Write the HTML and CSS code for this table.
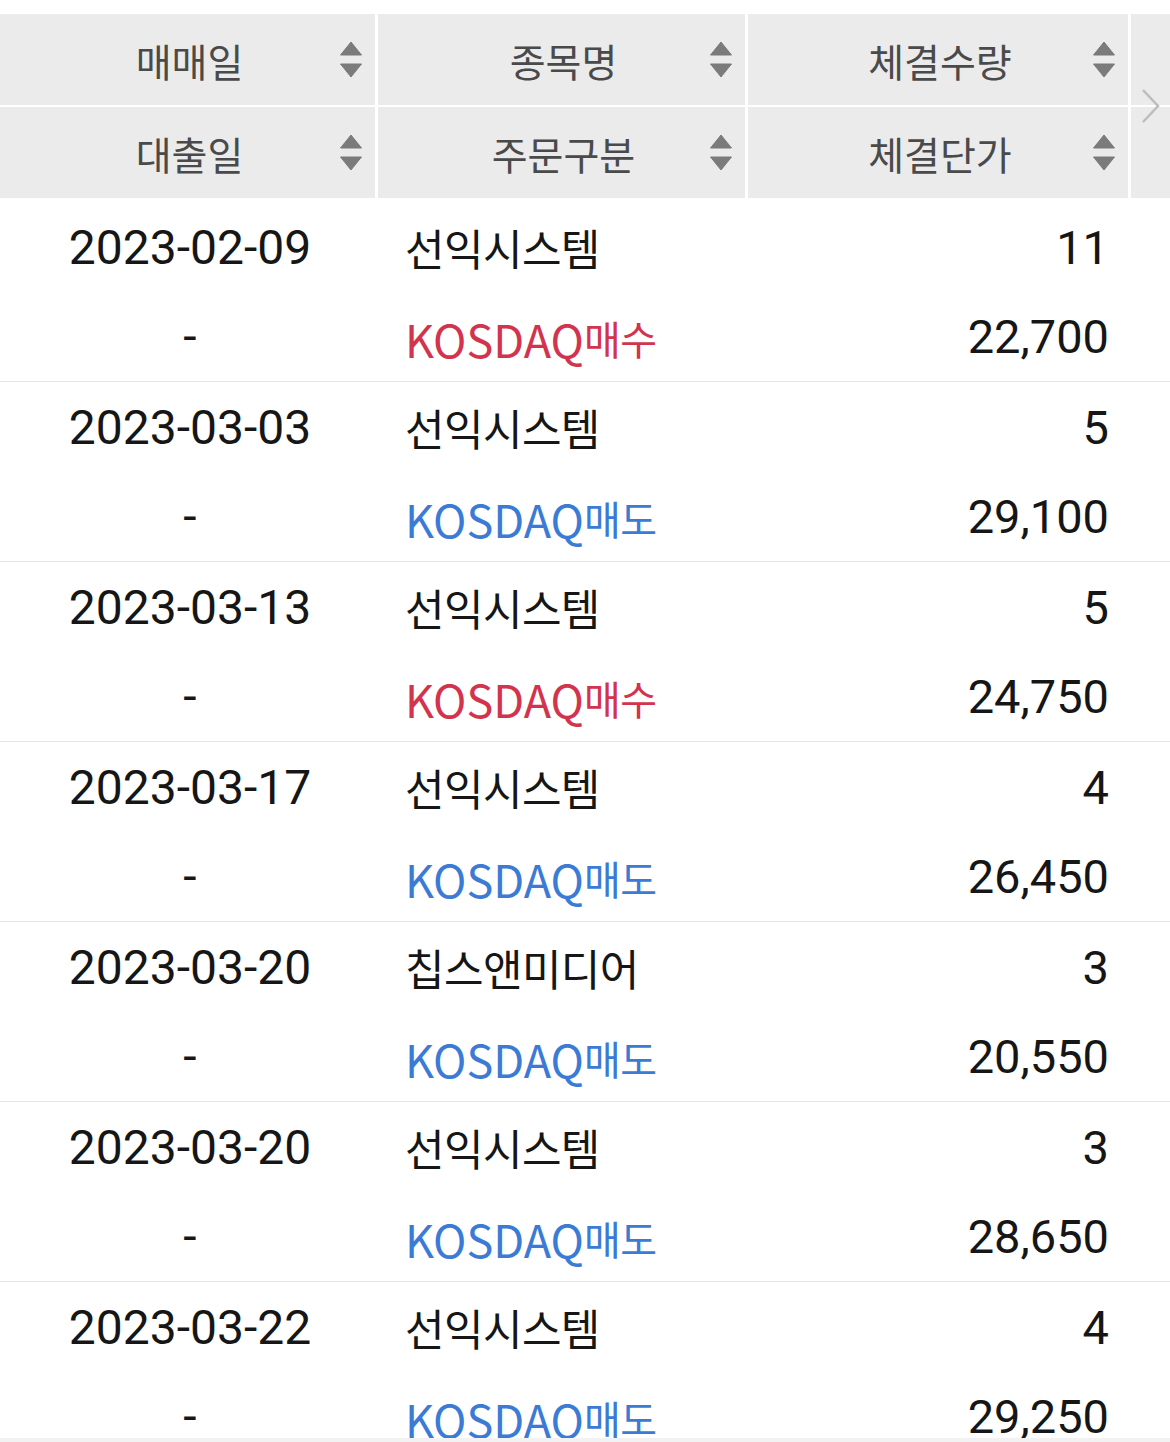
FILE: index.html
```html
<!DOCTYPE html>
<html lang="ko">
<head>
<meta charset="utf-8">
<title>체결내역</title>
<link rel="stylesheet" href="styles.css">
</head>
<body>
<div class="screen">
  <div class="viewport">
    <div class="head">
      <div class="hcell"><span class="htext">매매일</span><svg class="sort" viewBox="0 0 22 37" width="22" height="37"><path d="M11 1 L21.5 14 L0.5 14 Z"/><path d="M0.5 23 L21.5 23 L11 36 Z"/></svg></div>
      <div class="hcell"><span class="htext">종목명</span><svg class="sort" viewBox="0 0 22 37" width="22" height="37"><path d="M11 1 L21.5 14 L0.5 14 Z"/><path d="M0.5 23 L21.5 23 L11 36 Z"/></svg></div>
      <div class="hcell"><span class="htext">체결수량</span><svg class="sort" viewBox="0 0 22 37" width="22" height="37"><path d="M11 1 L21.5 14 L0.5 14 Z"/><path d="M0.5 23 L21.5 23 L11 36 Z"/></svg></div>
      <div class="hcell"></div>
      <div class="hcell"><span class="htext">대출일</span><svg class="sort" viewBox="0 0 22 37" width="22" height="37"><path d="M11 1 L21.5 14 L0.5 14 Z"/><path d="M0.5 23 L21.5 23 L11 36 Z"/></svg></div>
      <div class="hcell"><span class="htext">주문구분</span><svg class="sort" viewBox="0 0 22 37" width="22" height="37"><path d="M11 1 L21.5 14 L0.5 14 Z"/><path d="M0.5 23 L21.5 23 L11 36 Z"/></svg></div>
      <div class="hcell"><span class="htext">체결단가</span><svg class="sort" viewBox="0 0 22 37" width="22" height="37"><path d="M11 1 L21.5 14 L0.5 14 Z"/><path d="M0.5 23 L21.5 23 L11 36 Z"/></svg></div>
      <div class="hcell"></div>
      <svg class="more" viewBox="0 0 20 36" width="20" height="36"><path d="M2 2 L17 18 L2 34"/></svg>
    </div>

    <div class="rows">
      <div class="group">
        <div class="c date">2023-02-09</div>
        <div class="c name">선익시스템</div>
        <div class="c num">11</div>
        <div class="c"></div>
        <div class="c date">-</div>
        <div class="c name buy"><span class="mkt">KOSDAQ</span>매수</div>
        <div class="c num">22,700</div>
        <div class="c"></div>
      </div>
      <div class="group">
        <div class="c date">2023-03-03</div>
        <div class="c name">선익시스템</div>
        <div class="c num">5</div>
        <div class="c"></div>
        <div class="c date">-</div>
        <div class="c name sell"><span class="mkt">KOSDAQ</span>매도</div>
        <div class="c num">29,100</div>
        <div class="c"></div>
      </div>
      <div class="group">
        <div class="c date">2023-03-13</div>
        <div class="c name">선익시스템</div>
        <div class="c num">5</div>
        <div class="c"></div>
        <div class="c date">-</div>
        <div class="c name buy"><span class="mkt">KOSDAQ</span>매수</div>
        <div class="c num">24,750</div>
        <div class="c"></div>
      </div>
      <div class="group">
        <div class="c date">2023-03-17</div>
        <div class="c name">선익시스템</div>
        <div class="c num">4</div>
        <div class="c"></div>
        <div class="c date">-</div>
        <div class="c name sell"><span class="mkt">KOSDAQ</span>매도</div>
        <div class="c num">26,450</div>
        <div class="c"></div>
      </div>
      <div class="group">
        <div class="c date">2023-03-20</div>
        <div class="c name">칩스앤미디어</div>
        <div class="c num">3</div>
        <div class="c"></div>
        <div class="c date">-</div>
        <div class="c name sell"><span class="mkt">KOSDAQ</span>매도</div>
        <div class="c num">20,550</div>
        <div class="c"></div>
      </div>
      <div class="group">
        <div class="c date">2023-03-20</div>
        <div class="c name">선익시스템</div>
        <div class="c num">3</div>
        <div class="c"></div>
        <div class="c date">-</div>
        <div class="c name sell"><span class="mkt">KOSDAQ</span>매도</div>
        <div class="c num">28,650</div>
        <div class="c"></div>
      </div>
      <div class="group">
        <div class="c date">2023-03-22</div>
        <div class="c name">선익시스템</div>
        <div class="c num">4</div>
        <div class="c"></div>
        <div class="c date">-</div>
        <div class="c name sell"><span class="mkt">KOSDAQ</span>매도</div>
        <div class="c num">29,250</div>
        <div class="c"></div>
      </div>
    </div>
  </div>
  <div class="footer"></div>
</div>
</body>
</html>
```

FILE: styles.css
```css
html, body {
  margin: 0;
  padding: 0;
  background: #ffffff;
}

body {
  font-family: "Noto Sans CJK KR", "Noto Sans", sans-serif;
  color: #161616;
}

.screen {
  width: 1170px;
  height: 1442px;
  display: flex;
  flex-direction: column;
  overflow: hidden;
}

.viewport {
  height: 1438px;
  overflow: hidden;
  padding-top: 14px;
  box-sizing: border-box;
}

.footer {
  height: 4px;
  background: #f2f2f2;
}

/* header */
.head {
  position: relative;
  display: grid;
  grid-template-columns: 375px 367px 380px 1fr;
  grid-template-rows: 91px 91px;
  column-gap: 3px;
  row-gap: 2px;
}

.hcell {
  background: #ebebeb;
  display: grid;
  grid-template-columns: 1fr auto 1fr;
  align-items: center;
}

.htext {
  grid-column: 2;
  font-size: 39px;
  line-height: 1;
  color: #4a4a4a;
  padding-top: 2px;
  padding-left: 4px;
}

.sort {
  grid-column: 3;
  justify-self: end;
  margin-right: 13px;
  fill: #7b7b7b;
  stroke: #7b7b7b;
  stroke-width: 1;
  stroke-linejoin: round;
}

.more {
  position: absolute;
  left: 1141px;
  top: 74px;
  fill: none;
  stroke: #bdbdbd;
  stroke-width: 2.5;
}

/* body rows */
.rows {
  padding-top: 4px;
}

.group {
  display: grid;
  grid-template-columns: 375px 367px 380px 1fr;
  grid-template-rows: 90px 89px;
  column-gap: 3px;
  border-bottom: 1px solid #e6e6e6;
}

.c {
  display: flex;
  align-items: center;
  white-space: nowrap;
}

.date {
  justify-content: center;
  font-family: Roboto, "Liberation Sans", sans-serif;
  font-size: 48px;
  padding-left: 5px;
}

.name {
  padding-left: 27px;
  font-size: 43px;
  letter-spacing: -0.6px;
}

.mkt {
  font-size: 45px;
  letter-spacing: 0;
}

.buy {
  color: #d3344d;
}

.sell {
  color: #3b7bd6;
}

.buy, .sell {
  font-size: 40px;
  padding-top: 3px;
}

.num {
  justify-content: flex-end;
  padding-right: 19px;
  font-family: Roboto, "Liberation Sans", sans-serif;
  font-size: 47px;
}
```
